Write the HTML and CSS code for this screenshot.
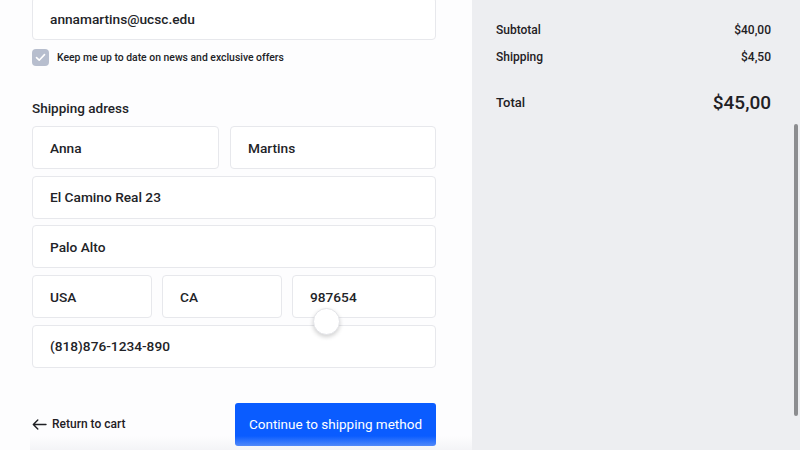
FILE: index.html
```html
<!DOCTYPE html>
<html>
<head>
<meta charset="utf-8">
<link rel="stylesheet" href="styles.css">
</head>
<body>
<div class="page">
  <main class="form">
    <div class="field email">annamartins@ucsc.edu</div>
    <label class="check">
      <span class="box"><svg width="11" height="9" viewBox="0 0 11 9"><path d="M1.5 4.6 L4.2 7.2 L9.5 1.6" fill="none" stroke="#fff" stroke-width="1.6" stroke-linecap="round" stroke-linejoin="round"/></svg></span>
      <span>Keep me up to date on news and exclusive offers</span>
    </label>
    <h2 class="title">Shipping adress</h2>
    <div class="rows">
      <div class="row two">
        <div class="field">Anna</div>
        <div class="field">Martins</div>
      </div>
      <div class="field">El Camino Real 23</div>
      <div class="field">Palo Alto</div>
      <div class="row three">
        <div class="field">USA</div>
        <div class="field">CA</div>
        <div class="field">987654</div>
      </div>
      <div class="field">(818)876-1234-890</div>
    </div>
    <div class="actions">
      <a class="back"><svg width="15" height="11" viewBox="0 0 15 11"><path d="M14 5.5 H1.5 M5.8 1 L1.3 5.5 L5.8 10" fill="none" stroke="#1f2024" stroke-width="1.4" stroke-linecap="round" stroke-linejoin="round"/></svg>Return to cart</a>
      <button class="primary">Continue to shipping method</button>
    </div>
    <div class="cursor"></div>
    <div class="fade"></div>
  </main>
  <aside class="summary">
    <div class="line"><span>Subtotal</span><span>$40,00</span></div>
    <div class="line"><span>Shipping</span><span>$4,50</span></div>
    <div class="line total"><span>Total</span><span class="big">$45,00</span></div>
    <div class="scrollbar"></div>
  </aside>
</div>
</body>
</html>
```
FILE: styles.css
```css
* { box-sizing: border-box; }
html, body { margin: 0; padding: 0; }
body {
  font-family: Roboto, "Noto Sans", sans-serif;
  color: #1f2024;
  width: 800px;
  height: 450px;
  overflow: hidden;
}
.page {
  display: flex;
  height: 450px;
}
.form {
  position: relative;
  width: 472px;
  background: #fdfdfe;
  padding: 0 36px 0 32px;
  overflow: hidden;
}
.field {
  height: 43px;
  border: 1px solid #e7e8ec;
  border-radius: 4px;
  background: #fff;
  display: flex;
  align-items: center;
  padding-left: 17px;
  font-size: 13.7px;
  font-weight: 500;
  color: #222327;
}
.email {
  margin-top: -3px;
}
.check {
  display: flex;
  align-items: center;
  gap: 8px;
  margin-top: 9px;
  font-size: 10.4px;
  font-weight: 500;
  color: #222327;
}
.box {
  width: 17px;
  height: 17px;
  border-radius: 4px;
  background: #b7bece;
  display: flex;
  align-items: center;
  justify-content: center;
}
.title {
  margin: 34px 0 0;
  font-size: 13.5px;
  font-weight: 500;
  line-height: 16px;
  color: #222327;
}
.rows {
  margin-top: 10px;
  display: flex;
  flex-direction: column;
  gap: 6.7px;
}
.row {
  display: grid;
  gap: 10px;
}
.row.two { grid-template-columns: 187px 1fr; gap: 11px; }
.row.three { grid-template-columns: 120px 120px 1fr; }
.actions {
  margin-top: 35px;
  display: flex;
  justify-content: space-between;
  align-items: center;
}
.back {
  display: flex;
  align-items: center;
  gap: 5px;
  font-size: 12px;
  font-weight: 500;
  color: #1f2024;
}
.primary {
  width: 201px;
  height: 43px;
  border: 0;
  border-radius: 3px;
  background: #0a5cff;
  color: #fff;
  font-family: Roboto, "Noto Sans", sans-serif;
  font-size: 13.5px;
  font-weight: 400;
  padding: 0;
}
.cursor {
  position: absolute;
  left: 313px;
  top: 308px;
  width: 27px;
  height: 27px;
  border-radius: 50%;
  background: #fff;
  border: 1px solid #e3e4e8;
  box-shadow: 0 2px 4px rgba(0,0,0,0.18);
}
.fade {
  position: absolute;
  left: 30px;
  right: 0;
  bottom: 0;
  height: 14px;
  background: linear-gradient(to bottom, rgba(235,236,240,0), rgba(232,233,237,0.45));
  pointer-events: none;
}
.summary {
  position: relative;
  flex: 1;
  background: #edeef1;
  padding: 22px 29px 0 24px;
}
.line {
  display: flex;
  justify-content: space-between;
  align-items: center;
  height: 16px;
  font-size: 12px;
  font-weight: 500;
  color: #1f2024;
  margin-bottom: 11px;
}
.line.total {
  margin-top: 26px;
  height: 22px;
  font-size: 13px;
}
.big {
  font-size: 19px;
  font-weight: 500;
}
.scrollbar {
  position: absolute;
  right: 2px;
  top: 124px;
  width: 4px;
  height: 292px;
  border-radius: 2px;
  background: #8c8d90;
}
```
